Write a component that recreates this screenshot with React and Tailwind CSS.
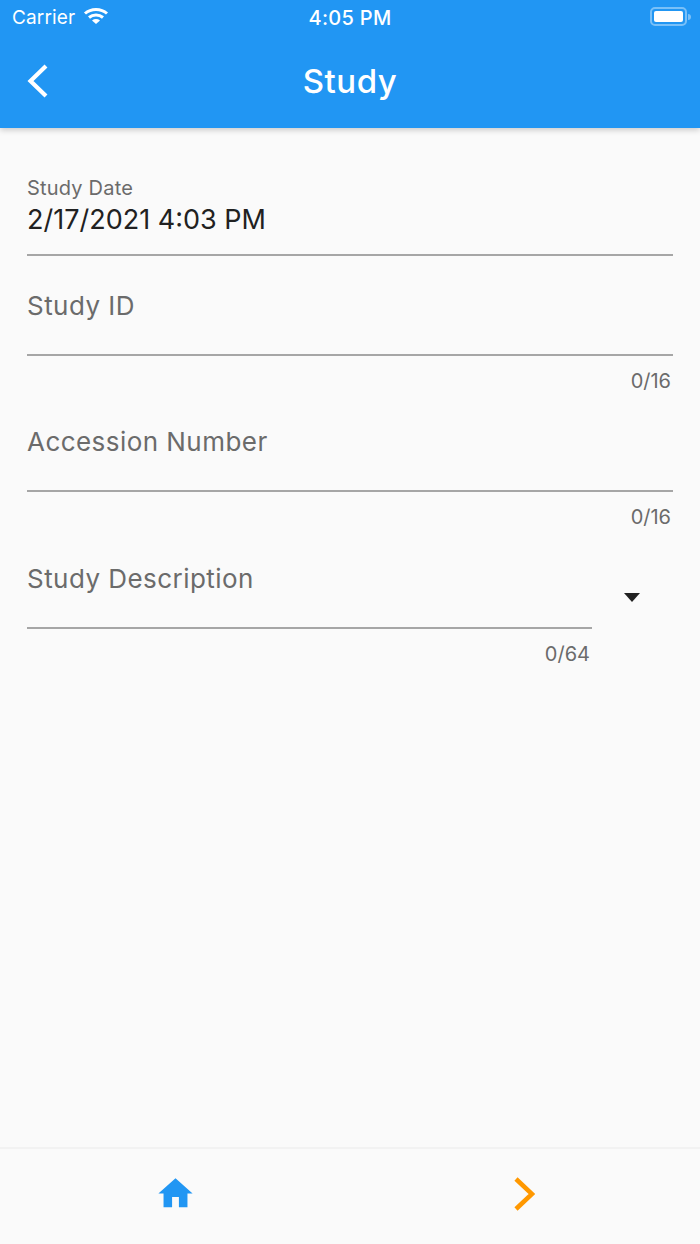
const font = { fontFamily: "Inter, sans-serif" };

function StatusBar() {
  return (
    <div className="h-[36px] relative flex items-center justify-between pl-[12px] pr-[9px] text-white">
      <div className="flex items-center gap-[8px]">
        <span className="text-[19px] leading-[36px] tracking-[0.15px]">Carrier</span>
        <svg width="26" height="20" viewBox="0 0 26 20" className="-mt-[4px]" fill="none" stroke="white" strokeWidth="3">
          <path d="M2 7.5C8 2 18 2 24 7.5" />
          <path d="M6 11.5C10 8 16 8 20 11.5" />
          <path d="M13 18l-4-3.6c2.4-1.8 5.6-1.8 8 0z" fill="white" stroke="none" />
        </svg>
      </div>
      <span className="absolute left-0 right-0 text-center text-[20px] leading-[36px] font-medium tracking-[0.3px]">4:05 PM</span>
      <div className="flex items-center -mt-[3px]">
        <div className="w-[37px] h-[19px] rounded-[5px] border-2 border-white/40 p-[2px]">
          <div className="w-full h-full rounded-[2px] bg-white" />
        </div>
        <div className="w-[3px] h-[6px] ml-[1px] rounded-r bg-white/40" />
      </div>
    </div>
  );
}

function AppBar() {
  return (
    <div className="h-[92px] relative flex items-center justify-center">
      <button className="absolute left-[27px] top-[28px] w-[21px] h-[34px]">
        <svg width="21" height="34" viewBox="0 0 21 34" fill="none" stroke="white" strokeWidth="4.2">
          <path d="M19 2L3.5 17 19 32" />
        </svg>
      </button>
      <h1 className="text-[33px] leading-[36px] font-medium text-white -mt-[2px] tracking-[0.5px]">Study</h1>
    </div>
  );
}

function Field({ label, counter, className = "" }) {
  return (
    <div className={className}>
      <div className="h-[76px] pt-[6px] border-b-2 border-[#a6a6a6]">
        <div className="text-[26px] leading-[40px] tracking-[0.45px] text-[#6b6b6b]">{label}</div>
      </div>
      <div className="mt-[13px] pr-[2px] text-right text-[20px] leading-[24px] text-[#6b6b6b]">{counter}</div>
    </div>
  );
}

export default function App() {
  return (
    <div className="w-[700px] h-[1244px] flex flex-col bg-[#fafafa]" style={font}>
      <header className="bg-[#2196f3] shadow-[0_2px_6px_rgba(0,0,0,0.2)] z-10">
        <StatusBar />
        <AppBar />
      </header>

      <main className="flex-1 px-[27px] pt-[47px]">
        <div className="h-[81px] border-b-2 border-[#a6a6a6]">
          <div className="text-[20px] leading-[27px] tracking-[0.2px] text-[#6b6b6b]">Study Date</div>
          <div className="text-[27px] leading-[36px] text-[#212121]">2/17/2021 4:03 PM</div>
        </div>
        <Field label="Study ID" counter="0/16" className="mt-[24px]" />
        <Field label="Accession Number" counter="0/16" className="mt-[23px]" />
        <div className="flex items-start">
          <Field label="Study Description" counter="0/64" className="mt-[24px] w-[565px]" />
          <svg width="16" height="9" viewBox="0 0 16 9" className="ml-[32px] mt-[64px]">
            <path d="M0 0h16L8 9z" fill="#212121" />
          </svg>
        </div>
      </main>

      <footer className="h-[97px] border-t-2 border-[#f2f2f2] flex pb-[6px]">
        <button className="flex-1 flex items-center justify-center">
          <svg width="41" height="41" viewBox="0 0 24 24" fill="#2196f3">
            <path d="M10 20v-6h4v6h5v-8h3L12 3 2 12h3v8z" />
          </svg>
        </button>
        <button className="flex-1 flex items-center justify-center">
          <svg width="21" height="34" viewBox="0 0 21 34" fill="none" stroke="#ff9800" strokeWidth="4.6" className="-ml-[2px]">
            <path d="M2 2l16 15L2 32" />
          </svg>
        </button>
      </footer>
    </div>
  );
}
